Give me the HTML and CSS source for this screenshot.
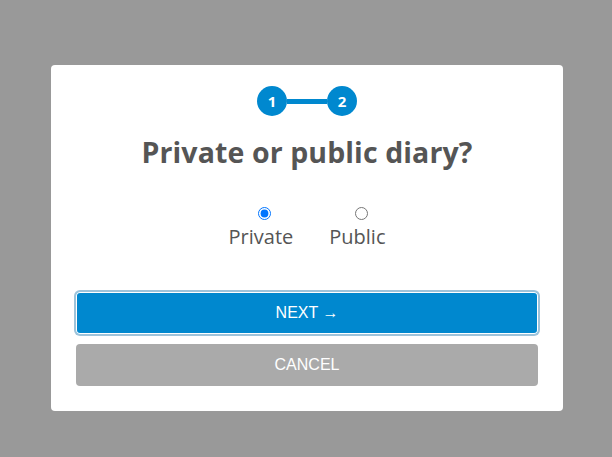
FILE: index.html
```html
<!DOCTYPE html>
<html>
<head>
<meta charset="utf-8">
<link rel="stylesheet" href="styles.css">
</head>
<body>
<div class="overlay">
  <div class="modal">
    <div class="steps">
      <span class="step">1</span>
      <span class="step-line"></span>
      <span class="step">2</span>
    </div>
    <h1 class="title">Private or public diary?</h1>
    <div class="choices">
      <label class="choice">
        <input type="radio" name="visibility" class="radio" checked>
        <span class="choice-text">Private</span>
      </label>
      <label class="choice">
        <input type="radio" name="visibility" class="radio">
        <span class="choice-text">Public</span>
      </label>
    </div>
    <div class="actions">
      <button class="btn btn-primary">NEXT →</button>
      <button class="btn btn-secondary">CANCEL</button>
    </div>
  </div>
</div>
</body>
</html>
```

FILE: styles.css
```css
html, body {
  margin: 0;
  padding: 0;
  height: 100%;
}
body {
  background: #999999;
  font-family: "Open Sans", "Noto Sans", sans-serif;
}
.overlay {
  display: flex;
  justify-content: center;
  padding: 65px 0 0 2px;
}
.modal {
  width: 512px;
  box-sizing: border-box;
  background: #ffffff;
  border-radius: 4px;
  padding: 21px 25px 25px;
  display: flex;
  flex-direction: column;
  align-items: center;
}
.steps {
  display: flex;
  align-items: center;
}
.step {
  width: 30px;
  height: 30px;
  border-radius: 50%;
  background: #0088cf;
  color: #ffffff;
  font-weight: 700;
  font-size: 15px;
  display: flex;
  align-items: center;
  justify-content: center;
}
.step-line {
  width: 40px;
  height: 5px;
  background: #0088cf;
}
.title {
  margin: 18px 0 0;
  font-size: 28.5px;
  font-weight: 700;
  color: #555555;
  line-height: 36px;
  letter-spacing: 0.1px;
}
.choices {
  display: flex;
  gap: 36px;
  margin-top: 37px;
}
.choice {
  display: flex;
  flex-direction: column;
  align-items: center;
  gap: 4px;
  color: #555555;
  font-size: 20px;
  line-height: 26px;
}
.radio {
  margin: 0 0 0 8px;
  width: 13px;
  height: 13px;
}
.actions {
  align-self: stretch;
  display: flex;
  flex-direction: column;
  gap: 10px;
  margin-top: 42px;
}
.btn {
  font-family: "Liberation Sans", Arial, sans-serif;
  font-size: 16px;
  color: #ffffff;
  border: none;
  border-radius: 4px;
  height: 42px;
  width: 100%;
  flex: none;
}
.btn-primary {
  background: #0088cf;
  box-shadow: inset 0 0 0 1px #ffffff, 0 0 0 2px #9ec3da;
}
.btn-secondary {
  background: #aaaaaa;
}
```
